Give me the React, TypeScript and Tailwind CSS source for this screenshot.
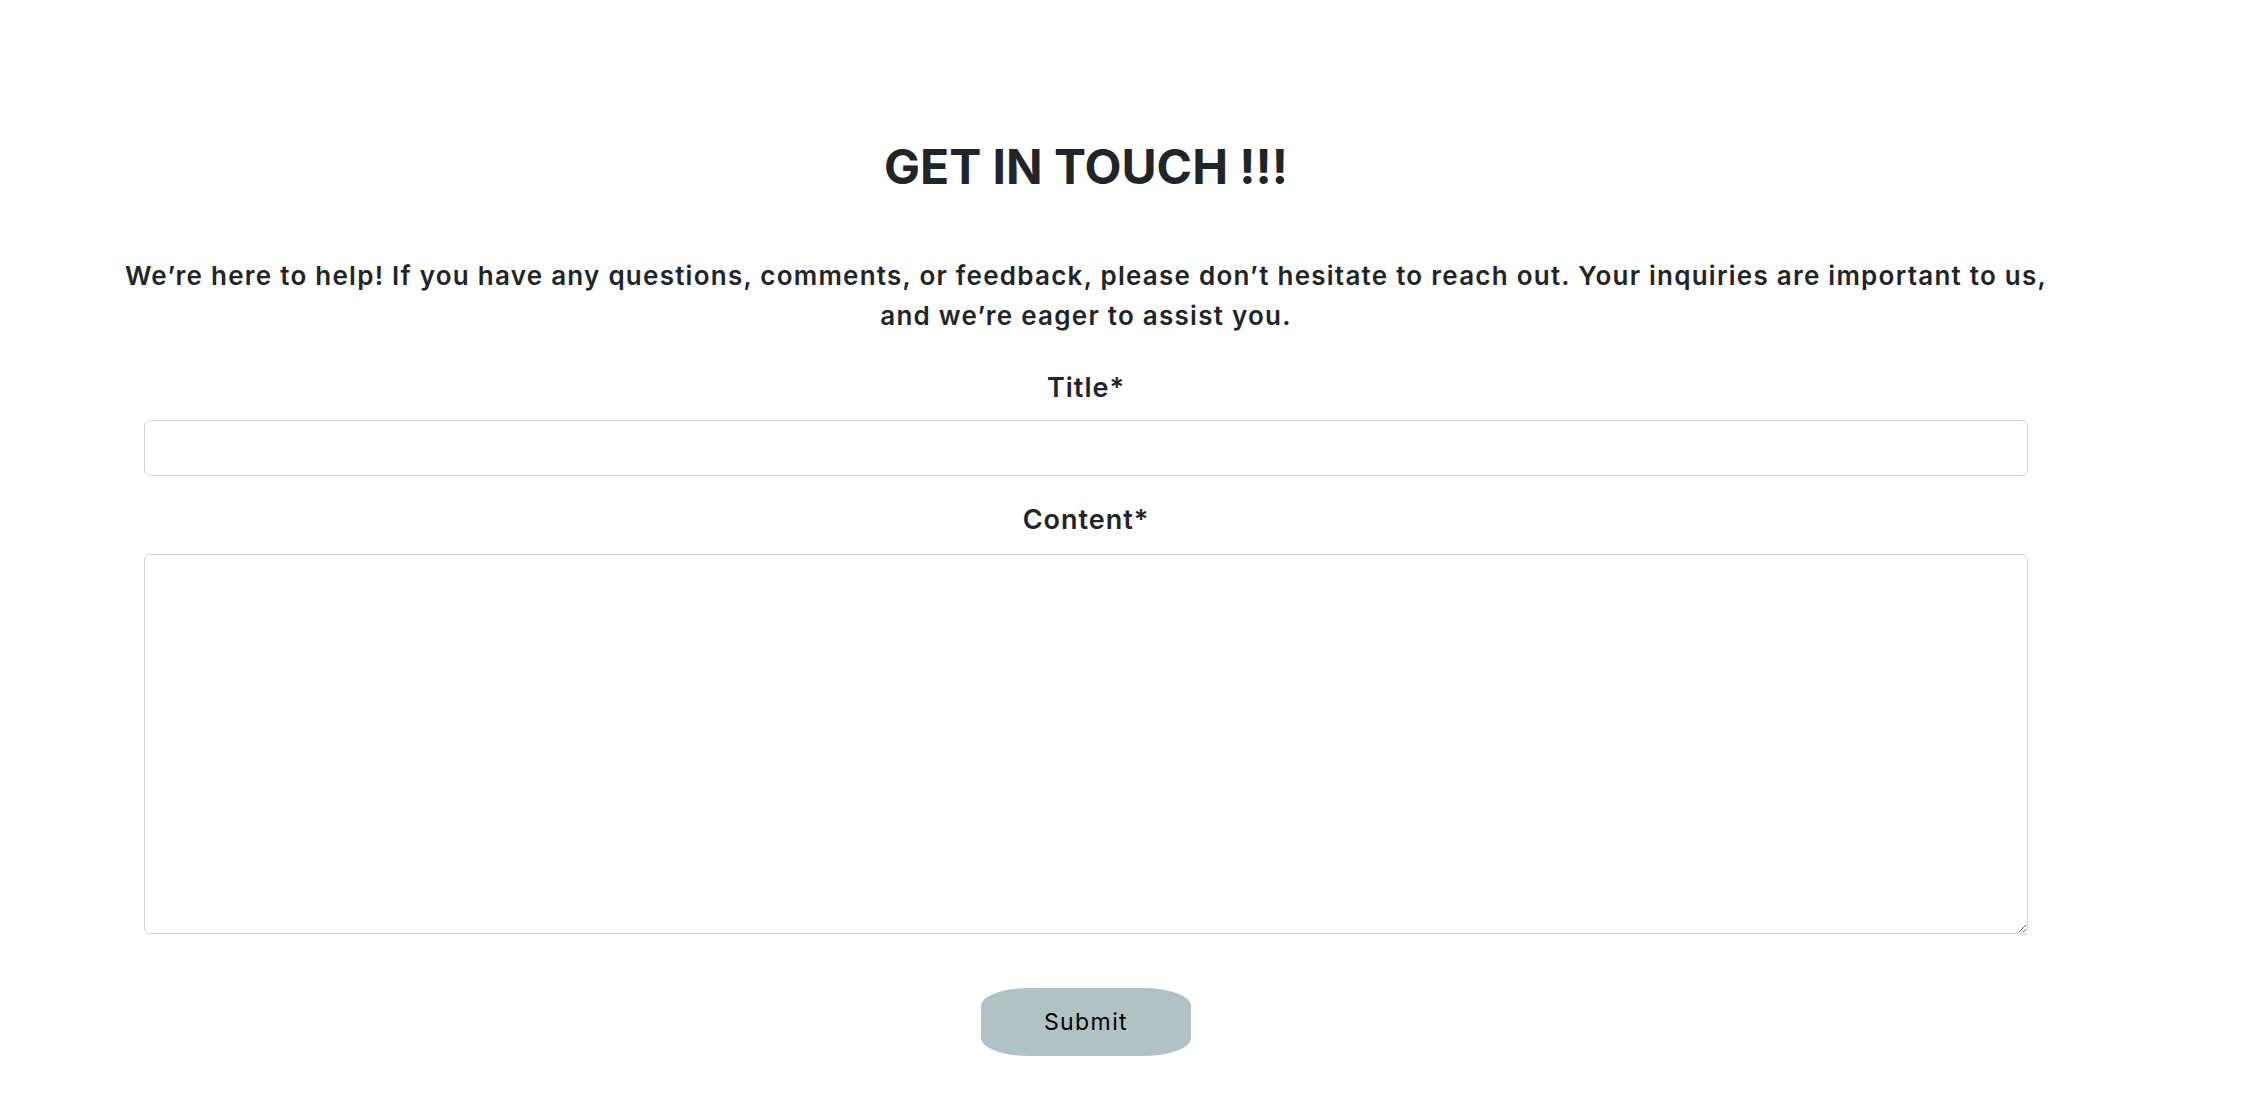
import React from "react";

export default function App() {
  return (
    <div
      className="w-[2172px] min-h-[1108px] bg-white text-[#212529]"
      style={{ fontFamily: "Inter, 'Noto Sans', sans-serif" }}
    >
      <div className="pt-[138px] flex flex-col items-center">
        <h1 className="text-[48px] leading-[58px] font-bold">GET IN TOUCH !!!</h1>
        <p className="mt-[60px] text-[26px] leading-[40px] font-semibold text-center tracking-[1.25px]">
          We’re here to help! If you have any questions, comments, or feedback, please don’t hesitate to reach out. Your inquiries are important to us,
          <br />
          and we’re eager to assist you.
        </p>
      </div>
      <form className="flex flex-col px-[144px]" onSubmit={(e) => e.preventDefault()}>
        <label className="mt-[32px] text-center text-[27px] leading-[40px] font-semibold tracking-[1px]">Title*</label>
        <input
          type="text"
          className="mt-[12px] h-[56px] w-full rounded-[6px] border border-[#ced4da] bg-white px-3 outline-none"
        />
        <label className="mt-[24px] text-center text-[27px] leading-[40px] font-semibold tracking-[1px]">Content*</label>
        <textarea className="mt-[14px] h-[380px] w-full rounded-[6px] border border-[#ced4da] bg-white px-3 py-2 outline-none" />
        <div className="mt-[54px] flex justify-center">
          <button
            type="submit"
            className="h-[68px] w-[210px] rounded-[48px/18px] bg-[#b0c3c2] text-[23px] font-normal tracking-[1.4px] text-black"
          >
            Submit
          </button>
        </div>
      </form>
    </div>
  );
}
